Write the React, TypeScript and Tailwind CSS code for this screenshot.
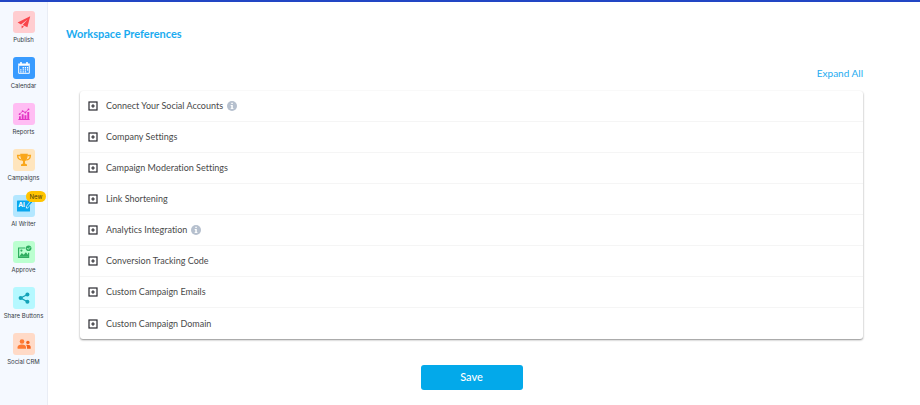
import { useState } from 'react'
import type { ReactNode } from 'react'

type NavItem = {
  label: string
  href: string
  tile: string
  icon: ReactNode
  badge?: string
}

// Sidebar icons, all on a 16px grid
const PublishIcon = () => (
  <svg viewBox="0 0 16 16" className="size-4" aria-hidden="true">
    <path fill="#f9444a" d="M14.2 2.2 1.6 8.6l3.4 1.9L11.6 5.4 6.6 11l4.8 2.2z" />
    <path fill="#f9444a" d="m5.6 11.4 2.4 1.2-2.4 2z" />
  </svg>
)

const CalendarIcon = () => (
  <svg viewBox="0 0 16 16" className="size-4" aria-hidden="true">
    <path fill="#fff" d="M2.2 3.4h2V2h1.6v1.4h4.4V2h1.6v1.4h2v2.4H2.2z" />
    <path fill="none" stroke="#fff" d="M2.7 5.6v7.7h10.6V5.6" />
    <path fill="#fff" d="M6.6 7h1.3v1.5H6.6zM8.8 7h1.3v1.5H8.8zM11 7h1.2v1.5H11zM4.2 9.2h1.3v1.3H4.2zM6.6 9.2h1.3v1.3H6.6zM8.8 9.2h1.3v1.3H8.8zM11 9.2h1.2v1.3H11zM4.2 11.2h1.3v1.3H4.2zM6.6 11.2h1.3v1.3H6.6zM8.8 11.2h1.3v1.3H8.8z" />
  </svg>
)

const ReportsIcon = () => (
  <svg viewBox="0 0 16 16" className="size-4" aria-hidden="true">
    <path fill="#e336c4" d="M3 10.2h1.8V13H3zM5.7 8.2h1.9V13H5.7zM8.5 9.3h1.9V13H8.5zM11.3 6h1.9v7h-1.9zM2.4 13h11.2v.9H2.4z" />
    <path fill="none" stroke="#e336c4" strokeWidth="0.8" d="m3.6 8.2 3-3.1 2.8 1.4 3.2-3.3" />
    <circle cx="3.6" cy="8.2" r="0.9" fill="#e336c4" />
    <circle cx="6.6" cy="5.1" r="0.9" fill="#e336c4" />
    <circle cx="9.4" cy="6.5" r="0.9" fill="#e336c4" />
    <circle cx="12.5" cy="3.3" r="0.9" fill="#e336c4" />
  </svg>
)

const CampaignsIcon = () => (
  <svg viewBox="0 0 16 16" className="size-4" aria-hidden="true">
    <path fill="#f9a61a" d="M4.2 1.8h7.6c0 3.7-.9 6.5-2.8 7.5v2.2l2 1V14H5v-1.5l2-1V9.3c-1.900-1-2.800-3.800-2.800-7.500z" />
    <path fill="none" stroke="#f9a61a" strokeWidth="1.3" d="M4.6 3.5H1.6c.1 2.700 1.600 4.200 4 4.500M11.400 3.500h3c-.1 2.700-1.600 4.200-4 4.500" />
  </svg>
)

const WriterIcon = () => (
  <svg viewBox="0 0 16 16" className="size-4" aria-hidden="true">
    <rect x="1" y="2.500" width="13" height="11" rx="0.600" fill="#08a6ee" />
    <text x="2.200" y="9.200" fontSize="6.500" fontWeight="700" fill="#fff" fontFamily="Inter, sans-serif">AI</text>
    <path stroke="#b3e7ff" strokeWidth="2.800" d="m16 2.800-5.400 7" />
    <path stroke="#08a6ee" strokeWidth="1.400" d="m15.700 3.400-4.600 5.800" />
    <path fill="#fff" d="m9.800 10.600.4-1.600 1.100.9z" />
  </svg>
)

const ApproveIcon = () => (
  <svg viewBox="0 0 16 16" className="size-4" aria-hidden="true">
    <path fill="none" stroke="#2fae60" strokeWidth="1.2" d="M9.2 4H2.6v9.400h10V8.800" />
    <path fill="#2fae60" d="m3 12.800 2.800-3.700 1.900 1.700 2.200-2.600 2.500 3v1.600z" />
    <circle cx="5.4" cy="6.6" r="1.1" fill="#2fae60" />
    <circle cx="12.6" cy="4.2" r="2.8" fill="#2fae60" />
    <path fill="none" stroke="#bbffd0" strokeWidth="0.9" d="m11.200 4.200 1.100 1.100 1.800-2" />
  </svg>
)

const ShareIcon = () => (
  <svg viewBox="0 0 16 16" className="size-4" aria-hidden="true">
    <path fill="none" stroke="#12a2b8" strokeWidth="1.300" d="M11.400 4.500 4.700 8l6.700 3.700" />
    <circle cx="11.400" cy="4.500" r="2" fill="#12a2b8" />
    <circle cx="4.700" cy="8" r="2.100" fill="#12a2b8" />
    <circle cx="11.400" cy="11.700" r="2" fill="#12a2b8" />
  </svg>
)

const CrmIcon = () => (
  <svg viewBox="0 0 16 16" className="size-4" aria-hidden="true">
    <circle cx="6" cy="5.500" r="2.300" fill="#ff7a33" />
    <path fill="#ff7a33" d="M1.600 12.700v-1.500c0-1.600 1.600-2.600 4.200-2.600s4.200 1 4.200 2.600v1.500z" />
    <circle cx="11.900" cy="6.400" r="1.700" fill="#f4621b" />
    <path fill="#f4621b" d="M11 12.700v-1.600c0-1-.4-1.700-.9-2.200 2.500-.5 4.600.4 4.600 2.200v1.600z" />
  </svg>
)

const navItems: NavItem[] = [
  { label: 'Publish', href: '#publish', tile: 'bg-[#ffcdd0]', icon: <PublishIcon /> },
  { label: 'Calendar', href: '#calendar', tile: 'bg-[#389bff]', icon: <CalendarIcon /> },
  { label: 'Reports', href: '#reports', tile: 'bg-[#ffbdf3]', icon: <ReportsIcon /> },
  { label: 'Campaigns', href: '#campaigns', tile: 'bg-[#ffe5bd]', icon: <CampaignsIcon /> },
  { label: 'AI Writer', href: '#ai-writer', tile: 'bg-[#b3e7ff]', icon: <WriterIcon />, badge: 'New' },
  { label: 'Approve', href: '#approve', tile: 'bg-[#bbffd0]', icon: <ApproveIcon /> },
  { label: 'Share Buttons', href: '#share-buttons', tile: 'bg-[#b5f8ff]', icon: <ShareIcon /> },
  { label: 'Social CRM', href: '#social-crm', tile: 'bg-[#ffdac7]', icon: <CrmIcon /> },
]

const sections = [
  { title: 'Connect Your Social Accounts', info: true },
  { title: 'Company Settings' },
  { title: 'Campaign Moderation Settings' },
  { title: 'Link Shortening' },
  { title: 'Analytics Integration', info: true },
  { title: 'Conversion Tracking Code' },
  { title: 'Custom Campaign Emails' },
  { title: 'Custom Campaign Domain' },
]

function Sidebar() {
  return (
    <nav className="w-12 shrink-0 bg-[#f5f9ff] border-r border-[#e9edf5] pt-[9px] flex flex-col gap-3 font-['Inter',sans-serif]">
      {navItems.map(item => (
        <a key={item.label} href={item.href} className="flex flex-col items-center gap-0.5">
          <span className={`relative size-[22px] rounded-[3px] flex items-center justify-center ${item.tile}`}>
            {item.icon}
            {item.badge && (
              <span className="absolute -top-1 left-[13px] h-[11px] px-1 rounded-full bg-[#ffc400] text-[6px] leading-[11px] text-[#4a3a10]">
                {item.badge}
              </span>
            )}
          </span>
          <span className="text-[6px] leading-[10px] text-[#333a44] whitespace-nowrap">{item.label}</span>
        </a>
      ))}
    </nav>
  )
}

// Boxed plus / minus in front of each section
function ToggleIcon({ open }: { open: boolean }) {
  return (
    <svg width="10" height="10" viewBox="0 0 10 10" className="shrink-0" aria-hidden="true">
      <rect x="1" y="1" width="8" height="8" fill="none" stroke="#29292f" strokeWidth="1.2" />
      <path stroke="#29292f" strokeWidth="1.2" d={open ? 'M3.2 5h3.6' : 'M3.2 5h3.6M5 3.2v3.6'} />
    </svg>
  )
}

function InfoIcon() {
  return (
    <svg width="10" height="10" viewBox="0 0 10 10" className="shrink-0" aria-hidden="true">
      <circle cx="5" cy="5" r="5" fill="#b6c0ce" />
      <path fill="#fff" d="M4.300 1.800h1.500v1.300H4.300zM3.700 4h2.100v3.200h.7v.9H3.600v-.9h.7V4.900h-.6z" />
    </svg>
  )
}

export default function App() {
  const [opened, setOpened] = useState<string[]>([])

  const toggle = (title: string) => {
    setOpened(prev => (prev.includes(title) ? prev.filter(t => t !== title) : [...prev, title]))
  }

  return (
    <div className="min-h-svh flex flex-col bg-white font-['Lato',sans-serif] [font-variant-ligatures:none]">
      <div className="h-0.5 bg-[#2246c4]" />
      <div className="flex-1 flex">
        <Sidebar />

        <main className="flex-1 min-w-0 pt-6 pl-8 pr-[57px]">
          <h1 className="-ml-3.5 text-[11px] leading-4 font-bold text-[#1aabf0]">Workspace Preferences</h1>

          <div className="mt-[23px] flex justify-end">
            <button
              type="button"
              onClick={() => setOpened(sections.map(s => s.title))}
              className="text-[10px] leading-4 text-[#1eabf0] cursor-pointer"
            >
              Expand All
            </button>
          </div>

          <div className="mt-[10px] rounded-[3px] bg-white divide-y divide-[#f5f5f5] shadow-[0_1px_2px_rgba(0,0,0,0.45)]">
            {sections.map(s => (
              <button
                key={s.title}
                type="button"
                aria-expanded={opened.includes(s.title)}
                onClick={() => toggle(s.title)}
                className="w-full h-[31px] px-2 flex items-center text-left text-[9px] leading-4 text-[#4a4a4a] cursor-pointer"
              >
                <ToggleIcon open={opened.includes(s.title)} />
                <span className="ml-2 mr-1">{s.title}</span>
                {s.info && <InfoIcon />}
              </button>
            ))}
          </div>

          <div className="mt-[26px] flex justify-center">
            <button type="button" className="w-[102px] h-[25px] rounded-[3px] bg-[#03a9ea] text-[11px] font-medium text-white cursor-pointer">
              Save
            </button>
          </div>
        </main>
      </div>
    </div>
  )
}
